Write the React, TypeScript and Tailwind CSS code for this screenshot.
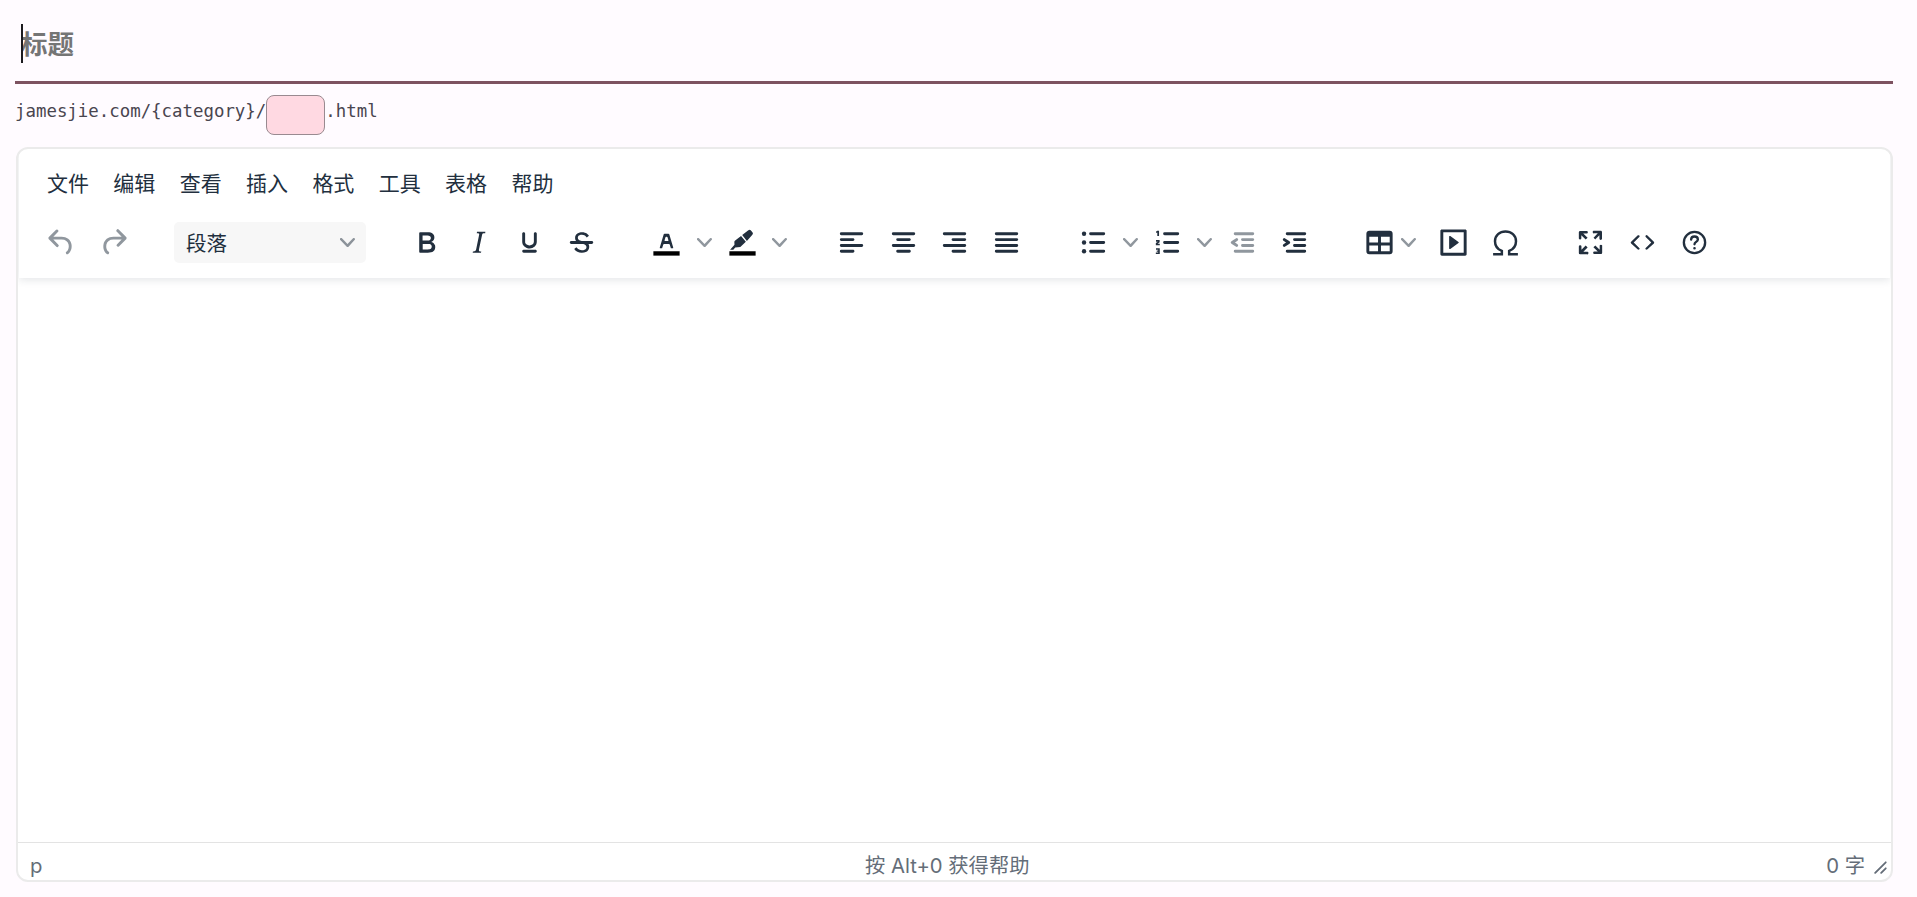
import React from "react";

const ink = "#222f3e";

const P: Record<string, string> = {
	undo: "M6.4 8H12c3.7 0 6.2 2 6.8 5.1.6 2.7-.4 5.6-2.3 6.8a1 1 0 0 1-1-1.8c1.1-.6 1.8-2.7 1.4-4.6-.5-2.1-2.1-3.5-4.9-3.5H6.4l3.3 3.3a1 1 0 1 1-1.4 1.4l-5-5a1 1 0 0 1 0-1.4l5-5a1 1 0 0 1 1.4 1.4L6.4 8Z",
	redo: "M17.6 10H12c-2.8 0-4.4 1.4-4.9 3.5-.4 2 .3 4 1.4 4.6a1 1 0 1 1-1 1.8c-2-1.2-2.9-4.1-2.3-6.8.6-3 3-5.1 6.8-5.1h5.6l-3.3-3.3a1 1 0 1 1 1.4-1.4l5 5a1 1 0 0 1 0 1.4l-5 5a1 1 0 0 1-1.4-1.4l3.3-3.3Z",
	bold: "M7.8 19c-.3 0-.5 0-.6-.2l-.2-.5V5.7c0-.2 0-.4.2-.5l.6-.2h5c1.5 0 2.7.3 3.5 1 .7.6 1.1 1.4 1.1 2.5a3 3 0 0 1-.6 1.9c-.4.6-1 1-1.6 1.2.4.1.9.3 1.3.6s.8.7 1 1.2c.4.4.5 1 .5 1.6 0 1.3-.4 2.3-1.3 3-.8.7-2.1 1-3.8 1H7.8Zm5-8.3c.6 0 1.2-.1 1.6-.5.4-.3.6-.7.6-1.3 0-1.1-.8-1.7-2.3-1.7H9.3v3.5h3.4Zm.5 6c.7 0 1.3-.1 1.7-.4.4-.4.6-.9.6-1.5s-.2-1-.7-1.4c-.4-.3-1-.4-2-.4H9.4v3.8h4Z",
	italic: "m16.7 4.7-.1.9h-.3c-.6 0-1 0-1.4.3-.3.3-.4.6-.5 1.1l-2.1 9.8v.6c0 .5.4.8 1.4.8h.2l-.2.8H8l.2-.8h.2c1.1 0 1.8-.5 2-1.5l2-9.8.1-.5c0-.6-.4-.8-1.4-.8h-.3l.2-.9h5.8Z",
	underline: "M16 5c.6 0 1 .4 1 1v5.5a4 4 0 0 1-.4 1.8l-1 1.4a5.3 5.3 0 0 1-5.5 1 5 5 0 0 1-1.6-1c-.5-.4-.8-.9-1.1-1.4a4 4 0 0 1-.4-1.8V6c0-.6.4-1 1-1s1 .4 1 1v5.5c0 .3 0 .6.2 1l.6.7a3.3 3.3 0 0 0 2.2.8 3.4 3.4 0 0 0 2.2-.8c.3-.2.4-.5.6-.8l.2-.9V6c0-.6.4-1 1-1ZM8 17h8c.6 0 1 .4 1 1s-.4 1-1 1H8a1 1 0 0 1 0-2Z",
	strike: "M15.6 8.5c-.5-.7-1-1.1-1.3-1.3-.6-.4-1.3-.6-2-.6-2.7 0-2.8 1.7-2.8 2.1 0 1.6 1.8 2 3.2 2.3 4.4.9 4.6 2.8 4.6 3.9 0 1.4-.7 4.1-5 4.1A6.2 6.2 0 0 1 7 16.4l1.5-1.1c.4.6 1.6 2 3.7 2 1.6 0 2.5-.4 3-1.2.4-.8.3-2-.8-2.6-.7-.4-1.6-.7-2.9-1-1-.2-3.9-.8-3.9-3.6C7.6 6 10.3 5 12.4 5c2.9 0 4.2 1.6 4.7 2.4l-1.5 1.1Z",
	left: "M5 5h14c.6 0 1 .4 1 1s-.4 1-1 1H5a1 1 0 1 1 0-2Zm0 4h8c.6 0 1 .4 1 1s-.4 1-1 1H5a1 1 0 1 1 0-2Zm0 8h8c.6 0 1 .4 1 1s-.4 1-1 1H5a1 1 0 0 1 0-2Zm0-4h14c.6 0 1 .4 1 1s-.4 1-1 1H5a1 1 0 0 1 0-2Z",
	center: "M5 5h14c.6 0 1 .4 1 1s-.4 1-1 1H5a1 1 0 1 1 0-2Zm3 4h8c.6 0 1 .4 1 1s-.4 1-1 1H8a1 1 0 1 1 0-2Zm0 8h8c.6 0 1 .4 1 1s-.4 1-1 1H8a1 1 0 0 1 0-2Zm-3-4h14c.6 0 1 .4 1 1s-.4 1-1 1H5a1 1 0 0 1 0-2Z",
	right: "M5 5h14c.6 0 1 .4 1 1s-.4 1-1 1H5a1 1 0 1 1 0-2Zm6 4h8c.6 0 1 .4 1 1s-.4 1-1 1h-8a1 1 0 0 1 0-2Zm0 8h8c.6 0 1 .4 1 1s-.4 1-1 1h-8a1 1 0 0 1 0-2Zm-6-4h14c.6 0 1 .4 1 1s-.4 1-1 1H5a1 1 0 0 1 0-2Z",
	justify: "M5 5h14c.6 0 1 .4 1 1s-.4 1-1 1H5a1 1 0 1 1 0-2Zm0 4h14c.6 0 1 .4 1 1s-.4 1-1 1H5a1 1 0 1 1 0-2Zm0 4h14c.6 0 1 .4 1 1s-.4 1-1 1H5a1 1 0 0 1 0-2Zm0 4h14c.6 0 1 .4 1 1s-.4 1-1 1H5a1 1 0 0 1 0-2Z",
	textColor: "M8.7 16h-.8a.5.5 0 0 1-.5-.6l2.7-9c.1-.3.3-.4.5-.4h2.8c.2 0 .4.1.5.4l2.7 9a.5.5 0 0 1-.5.6h-.8a.5.5 0 0 1-.4-.4l-.7-2.2c0-.3-.3-.4-.5-.4h-3.4c-.2 0-.4.1-.5.4l-.7 2.2c0 .3-.2.4-.4.4Zm2.6-7.6-.6 2a.5.5 0 0 0 .5.6h1.6a.5.5 0 0 0 .5-.6l-.6-2c0-.3-.3-.4-.5-.4h-.4c-.2 0-.4.1-.5.4Z",
	marker: "M7.2 10.5 11 7.5l3.3 4-3.8 3.5-3.5.5-1.3 1.5H3.5l3-3.5-.1-2c0-.4.3-.7.8-1ZM11.8 6.8 16 3.6c.8-.6 1.2-.6 1.8.2l1 1.2c.5.7.5 1.2-.2 1.8L15 11l-3.2-4.2Z",
	outdent: "M7 5h12c.6 0 1 .4 1 1s-.4 1-1 1H7a1 1 0 1 1 0-2Zm5 4h7c.6 0 1 .4 1 1s-.4 1-1 1h-7a1 1 0 0 1 0-2Zm0 4h7c.6 0 1 .4 1 1s-.4 1-1 1h-7a1 1 0 0 1 0-2Zm-5 4h12a1 1 0 0 1 0 2H7a1 1 0 0 1 0-2Zm1.6-3.8a1 1 0 0 1-1.2 1.6l-3-2a1 1 0 0 1 0-1.6l3-2a1 1 0 0 1 1.2 1.6L6.8 12l1.8 1.2Z",
	indent: "M7 5h12c.6 0 1 .4 1 1s-.4 1-1 1H7a1 1 0 1 1 0-2Zm5 4h7c.6 0 1 .4 1 1s-.4 1-1 1h-7a1 1 0 0 1 0-2Zm0 4h7c.6 0 1 .4 1 1s-.4 1-1 1h-7a1 1 0 0 1 0-2Zm-5 4h12a1 1 0 0 1 0 2H7a1 1 0 0 1 0-2Zm-2.6-3.8L6.2 12l-1.8-1.2a1 1 0 0 1 1.2-1.6l3 2a1 1 0 0 1 0 1.6l-3 2a1 1 0 1 1-1.2-1.6Z",
	table: "M19 4a2 2 0 0 1 2 2v12a2 2 0 0 1-2 2H5a2 2 0 0 1-2-2V6c0-1.1.9-2 2-2h14ZM5 14v4h6v-4H5Zm14 0h-6v4h6v-4Zm0-6h-6v4h6V8ZM5 12h6V8H5v4Z",
	embed: "M4 3h16c.6 0 1 .4 1 1v16c0 .6-.4 1-1 1H4a1 1 0 0 1-1-1V4c0-.6.4-1 1-1Zm1 2v14h14V5H5Zm4.8 2.6 5.6 4a.5.5 0 0 1 0 .8l-5.6 4A.5.5 0 0 1 9 16V8a.5.5 0 0 1 .8-.4Z",
	fullscreen: "m15.3 10-1.2-1.3 2.9-3h-2.3a.9.9 0 1 1 0-1.7H19c.5 0 .9.4.9.9v4.4a.9.9 0 1 1-1.8 0V7l-2.9 3Zm0 4 3 3v-2.3a.9.9 0 1 1 1.7 0V19c0 .5-.4.9-.9.9h-4.4a.9.9 0 1 1 0-1.8H17l-3-2.9 1.3-1.2ZM10 15.4l-2.9 3h2.3a.9.9 0 1 1 0 1.7H5a.9.9 0 0 1-1-.9v-4.4a.9.9 0 1 1 1.8 0V17l2.9-3 1.2 1.3ZM8.7 10 5.7 7v2.3a.9.9 0 0 1-1.7 0V5c0-.5.4-.9.9-.9h4.4a.9.9 0 0 1 0 1.8H7l3 2.9-1.3 1.2Z",
	code: "M9.8 15.7c.3.3.3.8 0 1-.3.4-.9.4-1.2 0l-4.4-4.1a.8.8 0 0 1 0-1.2l4.4-4.2c.3-.3.9-.3 1.2 0 .3.3.3.8 0 1.1L6 12l3.8 3.7ZM14.2 15.7c-.3.3-.3.8 0 1 .4.4.9.4 1.2 0l4.4-4.1c.3-.3.3-.9 0-1.2l-4.4-4.2a.8.8 0 0 0-1.2 0c-.3.3-.3.8 0 1.1L18 12l-3.8 3.7Z",
};

const Icon = ({ name, dim }: { name: string; dim?: boolean }) => (
	<svg width="35" height="35" viewBox="0 0 24 24" fill={ink} fillOpacity={dim ? 0.5 : 1}>
		<path d={P[name]} fillRule="evenodd" />
	</svg>
);

const Chevron = () => (
	<svg width="15" height="15" viewBox="0 0 10 10" fill={ink} fillOpacity={0.5}>
		<path d="M8.7 2.2c.3-.3.8-.3 1 0 .4.4.4.9 0 1.2L5.7 7.8c-.3.3-.9.3-1.2 0L.2 3.4a.8.8 0 0 1 0-1.2c.3-.3.8-.3 1.1 0L5 6l3.7-3.8Z" />
	</svg>
);

// Toolbar cell: fixed width, icon centred
const Cell = ({ className, children }: { className: string; children: React.ReactNode }) => (
	<div className={`flex items-center justify-center h-[42px] shrink-0 ${className}`}>{children}</div>
);

export default function App() {
	const menus = ["文件", "编辑", "查看", "插入", "格式", "工具", "表格", "帮助"];

	return (
		<div className="w-[1917px] h-[897px] overflow-hidden bg-[#fffbff] pl-[15px] pr-[24px] font-['Noto_Sans_CJK_SC','Noto_Sans',sans-serif]">
			{/* Title */}
			<div className="relative h-[84px] border-b-[3px] border-[#7d5260] pl-[6px] pt-[22px]">
				<span className="absolute left-[6px] top-[24px] w-[2px] h-[39px] bg-[#1c1b1f]" />
				<span className="text-[26.5px] leading-[42px] font-bold text-[#757575]">标题</span>
			</div>

			{/* Slug */}
			<div className="flex items-center h-[63px] pb-[2px] text-[17.4px] text-[#49454f] font-['DejaVu_Sans_Mono',monospace]">
				<span className="-mt-[6px]">jamesjie.com/&#123;category&#125;/</span>
				<div className="w-[59px] h-[40px] rounded-[8px] border border-[#998a90] bg-[#ffd9e2]" />
				<span className="-mt-[6px]">.html</span>
			</div>

			{/* Editor */}
			<div className="flex flex-col h-[735px] ml-[1px] rounded-[12px] border-2 border-[#ebebeb] bg-white overflow-hidden">
				<div className="relative z-10 h-[129px] pl-[16px] shadow-[0_2px_8px_rgba(34,47,62,0.12)] mx-[1px]">
					<div className="flex h-[53px] items-end pl-[7px]">
						{menus.map((m) => (
							<span key={m} className="w-[66.35px] pl-[5px] text-[21px] leading-[30px] text-[#222f3e] h-[35px]">
								{m}
							</span>
						))}
					</div>
					<div className="flex items-center h-[48px] mt-[16px]">
						<Cell className="w-[53px]"><Icon name="undo" dim /></Cell>
						<Cell className="w-[50px]"><Icon name="redo" dim /></Cell>
						<div className="flex items-center justify-between ml-[36px] w-[192px] h-[41px] rounded-[5px] bg-[#f7f7f7] pl-[12px] pr-[11px] text-[20.5px] text-[#222f3e]">
							<span>段落</span>
							<Chevron />
						</div>
						<Cell className="w-[51.5px] ml-[35px]"><Icon name="bold" /></Cell>
						<Cell className="w-[51.5px]"><Icon name="italic" /></Cell>
						<Cell className="w-[51.5px]"><Icon name="underline" /></Cell>
						<Cell className="w-[51.5px]">
							<svg width="35" height="35" viewBox="0 0 24 24" fill={ink}>
								<path d={P.strike} />
								<path d="M5 11h14a1 1 0 0 1 0 2H5a1 1 0 0 1 0-2Z" />
							</svg>
						</Cell>

						<Cell className="w-[38px] ml-[40px]">
							<svg width="35" height="35" viewBox="0 0 24 24" fill={ink}>
								<path d={P.textColor} fillRule="evenodd" />
								<path d="M3 18h18v3H3z" fill="#000" />
							</svg>
						</Cell>
						<Cell className="w-[38px]"><Chevron /></Cell>
						<Cell className="w-[38px]">
							<svg width="35" height="35" viewBox="0 0 24 24" fill={ink}>
								<path d={P.marker} />
								<path d="M3 18h18v3H3z" fill="#000" />
							</svg>
						</Cell>
						<Cell className="w-[37px]"><Chevron /></Cell>

						<Cell className="w-[51.6px] ml-[28px]"><Icon name="left" /></Cell>
						<Cell className="w-[51.6px]"><Icon name="center" /></Cell>
						<Cell className="w-[51.6px]"><Icon name="right" /></Cell>
						<Cell className="w-[51.6px]"><Icon name="justify" /></Cell>

						<Cell className="w-[38px] ml-[42px]">
							<svg width="35" height="35" viewBox="0 0 24 24" fill={ink}>
								<circle cx="5.5" cy="6" r="1.5" />
								<circle cx="5.5" cy="12" r="1.5" />
								<circle cx="5.5" cy="18" r="1.5" />
								<path d="M10 5h9a1 1 0 0 1 0 2h-9a1 1 0 0 1 0-2Zm0 6h9a1 1 0 0 1 0 2h-9a1 1 0 0 1 0-2Zm0 6h9a1 1 0 0 1 0 2h-9a1 1 0 0 1 0-2Z" />
							</svg>
						</Cell>
						<Cell className="w-[36px]"><Chevron /></Cell>
						<Cell className="w-[38px]">
							<svg width="35" height="35" viewBox="0 0 24 24" fill={ink}>
								<path d="M10 5h9a1 1 0 0 1 0 2h-9a1 1 0 0 1 0-2Zm0 6h9a1 1 0 0 1 0 2h-9a1 1 0 0 1 0-2Zm0 6h9a1 1 0 0 1 0 2h-9a1 1 0 0 1 0-2Z" />
								<path d="M5 4h1.2v3.6H5V5.1l-.8.3V4.5L5 4Zm-.9 6.2h2.5v1.7l-1.4.9h1.5v1H4v-1.4l1.4-1H4.1v-1.2Zm0 5.8h2.6v3.8H4v-1h1.6v-.4H4.6v-.9h1V17H4.1v-1Z" />
							</svg>
						</Cell>
						<Cell className="w-[36px]"><Chevron /></Cell>
						<Cell className="w-[40px]"><Icon name="outdent" dim /></Cell>
						<Cell className="w-[52px] ml-[6px]"><Icon name="indent" /></Cell>

						<Cell className="w-[38px] ml-[40px]"><Icon name="table" /></Cell>
						<Cell className="w-[20px]"><Chevron /></Cell>
						<Cell className="w-[52px] ml-[9px]"><Icon name="embed" /></Cell>
						<Cell className="w-[52px]">
							<svg width="35" height="35" viewBox="0 0 24 24" fill="none" stroke={ink} strokeWidth="1.7">
								<path d="M3.5 20H9.5v-2.2C6.6 16.6 4.8 14 4.8 11.1 4.8 7 8 4.4 12 4.4s7.2 2.6 7.2 6.7c0 2.9-1.8 5.5-4.7 6.7V20h6" />
							</svg>
						</Cell>

						<Cell className="w-[52px] ml-[33px]"><Icon name="fullscreen" /></Cell>
						<Cell className="w-[52px]"><Icon name="code" /></Cell>
						<Cell className="w-[52px]">
							<svg width="35" height="35" viewBox="0 0 24 24" fill="none" stroke={ink} strokeWidth="1.6" strokeLinecap="round">
								<circle cx="12" cy="12" r="7.3" />
								<path d="M9.7 10c0-1.4 1-2.1 2.3-2.1s2.3.8 2.3 2c0 1.7-2.3 1.7-2.3 3.3" />
								<circle cx="12" cy="15.9" r=".4" fill={ink} strokeWidth="1" />
							</svg>
						</Cell>
					</div>
				</div>

				{/* Content area */}
				<div className="flex-1 bg-white" />

				{/* Status bar */}
				<div className="relative flex items-end justify-between h-[38px] border-t border-[#e3e3e3] pl-[12px] pr-[26px] font-['Inter','Noto_Sans_CJK_SC',sans-serif] text-[20.3px] leading-[29px] text-[#646d78]">
					<span>p</span>
					<span className="absolute left-[847px] bottom-0">按 Alt+0 获得帮助</span>
					<span>0 字</span>
					<svg className="absolute right-[3px] bottom-[5px]" width="15" height="15" viewBox="0 0 10 10">
						<path d="M8.1 1.1A.5.5 0 1 1 8.9 2l-7 7A.5.5 0 1 1 1 8.1zM8.1 5.1A.5.5 0 1 1 8.9 6l-3 3A.5.5 0 1 1 5 8.1z" fill="#646d78" />
					</svg>
				</div>
			</div>
		</div>
	);
}
